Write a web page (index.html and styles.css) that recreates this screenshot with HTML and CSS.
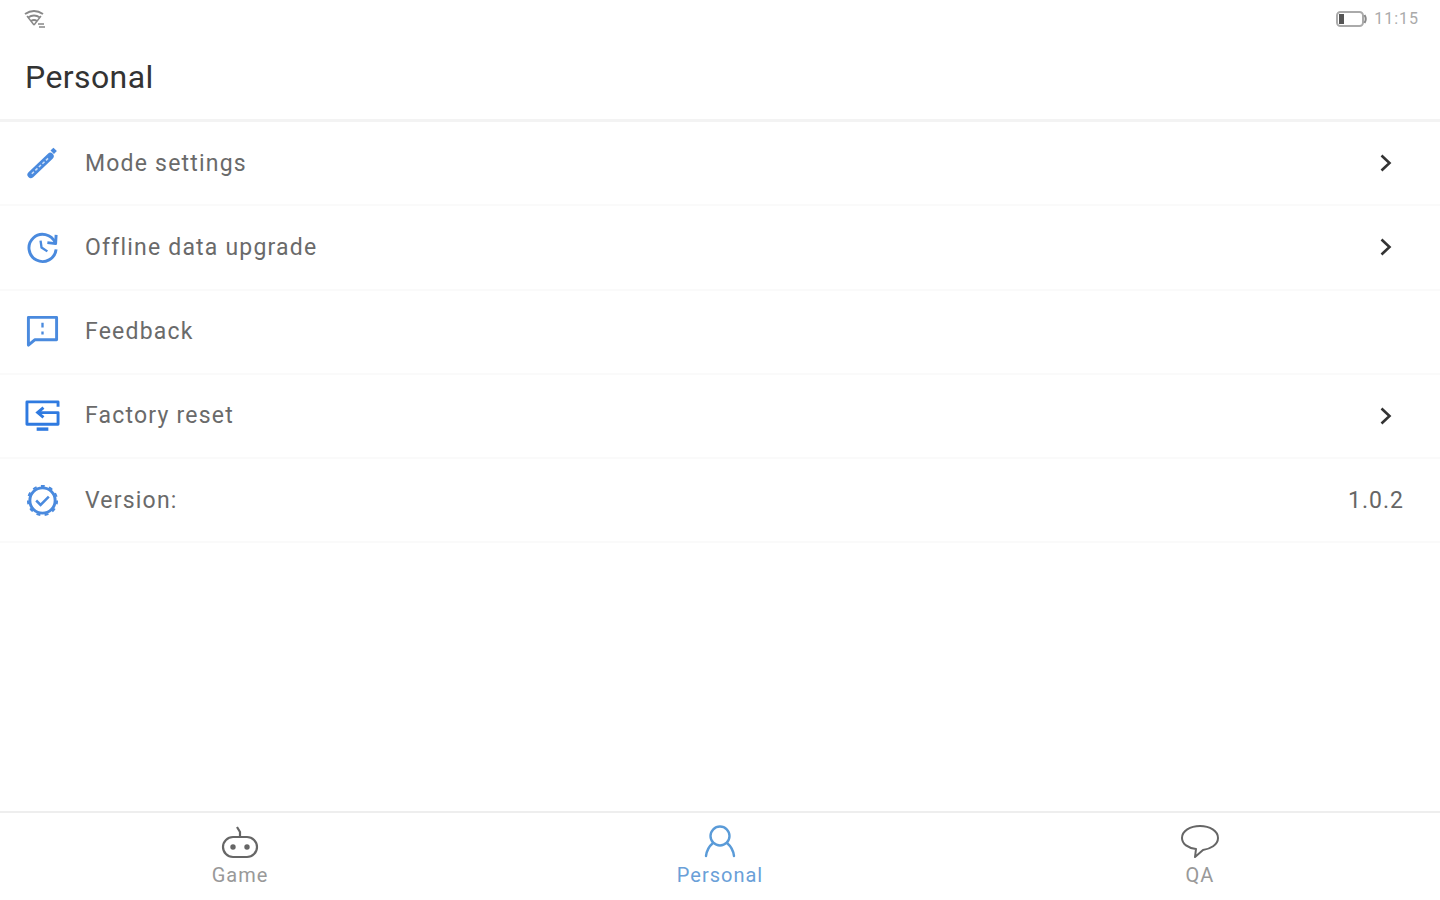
FILE: index.html
```html
<!DOCTYPE html>
<html lang="en">
<head>
    <meta charset="UTF-8">
    <meta name="viewport" content="width=device-width, initial-scale=1.0">
    <title>Personal</title>
    <link rel="stylesheet" href="styles.css">
</head>
<body>
    <div class="status-bar">
        <svg class="wifi-icon" width="22" height="20" viewBox="0 0 22 20" fill="none" stroke="#888" stroke-width="2">
            <path d="M1 5 Q10 -1 19 5"/>
            <path d="M4 8.500 Q10 4.500 16 8.500"/>
            <path d="M7 12 Q10 10 13 12"/>
            <path d="M10 16 L3 7 M10 16 L17 7" stroke-width="1.400"/>
            <path d="M14 15 L20 15 M15 18 L21 18" stroke-width="1.400"/>
        </svg>
        <div class="status-right">
            <svg width="32" height="18" viewBox="0 0 32 18" fill="none">
                <rect x="1" y="2" width="26" height="14" rx="3.500" stroke="#aaa" stroke-width="2"/>
                <rect x="3" y="4" width="5" height="10" fill="#555"/>
                <path d="M28.500 5 Q31 9 28.500 13" stroke="#888" stroke-width="2"/>
            </svg>
            <span class="clock">11:15</span>
        </div>
    </div>

    <header class="page-header">
        <h1>Personal</h1>
    </header>

    <main class="menu">
        <div class="menu-row">
            <svg class="row-icon" viewBox="0 0 36 36" fill="none" stroke="#4a8ade">
                <path d="M6 29.500 L26 10.500" stroke-width="7" stroke-linecap="round"/>
                <path d="M7 28.500 L25 11.500" stroke="#cfe0f6" stroke-width="1.600" stroke-dasharray="3 2"/>
                <path d="M28 6.500 L31 3.500" stroke-width="5"/>
            </svg>
            <span class="row-label">Mode settings</span>
            <svg class="chevron" width="14" height="20" viewBox="0 0 14 20" fill="none" stroke="#333" stroke-width="2.600">
                <path d="M2.500 2.500 L10.500 10 L2.500 17.500"/>
            </svg>
        </div>
        <div class="menu-row">
            <svg class="row-icon" viewBox="0 0 36 36" fill="none" stroke="#4a8ade" stroke-width="3">
                <path d="M31 13 A14 14 0 1 0 32 20"/>
                <path d="M32 5 L31.500 14 L23 13" stroke-linejoin="round"/>
                <path d="M16 11 L17 18 L23 22" stroke-width="2.400"/>
            </svg>
            <span class="row-label">Offline data upgrade</span>
            <svg class="chevron" width="14" height="20" viewBox="0 0 14 20" fill="none" stroke="#333" stroke-width="2.600">
                <path d="M2.500 2.500 L10.500 10 L2.500 17.500"/>
            </svg>
        </div>
        <div class="menu-row">
            <svg class="row-icon" viewBox="0 0 36 36" fill="none" stroke="#4a8ade" stroke-width="3">
                <path d="M3.500 3.500 H32.500 V26.500 H10 L3.500 32 Z" stroke-linejoin="round"/>
                <path d="M18 9 V14 M18 18 V21" stroke-width="2.400"/>
            </svg>
            <span class="row-label">Feedback</span>
        </div>
        <div class="menu-row">
            <svg class="row-icon" viewBox="0 0 36 36" fill="none" stroke="#2f7ae0" stroke-width="3">
                <path d="M34 9 V4 H2 V27 H34 V15 H14" stroke-linejoin="round"/>
                <path d="M19 10 L13 15 L19 20"/>
                <path d="M12 32 H24" stroke-width="3.500"/>
            </svg>
            <span class="row-label">Factory reset</span>
            <svg class="chevron" width="14" height="20" viewBox="0 0 14 20" fill="none" stroke="#333" stroke-width="2.600">
                <path d="M2.500 2.500 L10.500 10 L2.500 17.500"/>
            </svg>
        </div>
        <div class="menu-row">
            <svg class="row-icon" viewBox="0 0 36 36" fill="none" stroke="#4a8ade" stroke-width="3">
                <circle cx="18" cy="18" r="13"/>
                <circle cx="18" cy="18" r="15" stroke-width="2" stroke-dasharray="4 4.570"/>
                <path d="M11.500 18 L16 22.500 L24.500 14" stroke-width="2.600"/>
            </svg>
            <span class="row-label">Version:</span>
            <span class="row-value">1.0.2</span>
        </div>
    </main>

    <nav class="tab-bar">
        <div class="tab">
            <svg class="tab-icon" width="40" height="36" viewBox="0 0 40 36" fill="none" stroke="#666" stroke-width="2.200">
                <rect x="3" y="13" width="34" height="20" rx="10"/>
                <path d="M20 13 V8 L17 3"/>
                <circle cx="13" cy="23" r="1.600" fill="#666"/>
                <circle cx="27" cy="23" r="1.600" fill="#666"/>
            </svg>
            <span>Game</span>
        </div>
        <div class="tab tab-active">
            <svg class="tab-icon" width="40" height="36" viewBox="0 0 40 36" fill="none" stroke="#5a9bd8" stroke-width="2.400">
                <circle cx="20" cy="12" r="9.500"/>
                <path d="M13 19 Q7 24 6 32 M27 19 Q33 24 34 32" stroke-linecap="round"/>
            </svg>
            <span>Personal</span>
        </div>
        <div class="tab">
            <svg class="tab-icon" width="40" height="36" viewBox="0 0 40 36" fill="none" stroke="#666" stroke-width="2">
                <path d="M20 2 C30 2 38 7 38 14 C38 21 30 25 23 26 L15 33 L16 25 C8 24 2 20 2 14 C2 7 10 2 20 2 Z" stroke-linejoin="round"/>
            </svg>
            <span>QA</span>
        </div>
    </nav>
</body>
</html>
```

FILE: styles.css
```css
/* Reset */
body, h1 {
    margin: 0;
    padding: 0;
}

body {
    font-family: Roboto, 'Liberation Sans', sans-serif;
    background: #fff;
    color: #333;
    height: 900px;
    display: flex;
    flex-direction: column;
    overflow: hidden;
}

.status-bar {
    height: 37px;
    padding: 0 21px 0 24px;
    display: flex;
    justify-content: space-between;
    align-items: center;
}

.status-right {
    display: flex;
    align-items: center;
    gap: 6px;
}

.clock {
    font-size: 16px;
    letter-spacing: 1px;
    color: #aaa;
}

.page-header {
    height: 85px;
    box-sizing: border-box;
    padding-left: 25px;
    display: flex;
    align-items: center;
    border-bottom: 3px solid #f3f3f3;
}

.page-header h1 {
    font-size: 32px;
    font-weight: 400;
    letter-spacing: 0.4px;
    color: #333;
    margin-top: -3px;
}

.menu {
    flex: 1;
}

.menu-row {
    height: 84.250px;
    box-sizing: border-box;
    padding: 0 36px 0 25px;
    display: flex;
    align-items: center;
    border-bottom: 2px solid #fafafa;
}

.row-icon {
    width: 35px;
    height: 35px;
    margin-right: 25px;
}

.row-label {
    flex: 1;
    font-size: 23px;
    letter-spacing: 1.200px;
    color: #6a6a6a;
}

.chevron {
    margin-right: 11px;
}

.row-value {
    font-size: 23px;
    letter-spacing: 1px;
    color: #666;
}

.tab-bar {
    height: 89px;
    box-sizing: border-box;
    border-top: 2px solid #eee;
    display: flex;
}

.tab {
    flex: 1;
    display: flex;
    flex-direction: column;
    align-items: center;
    padding-top: 11px;
    font-size: 20px;
    letter-spacing: 1px;
    color: #999;
}

.tab-icon {
    display: block;
    margin-bottom: 3px;
}

.tab-active {
    color: #6aa0d8;
}
```
